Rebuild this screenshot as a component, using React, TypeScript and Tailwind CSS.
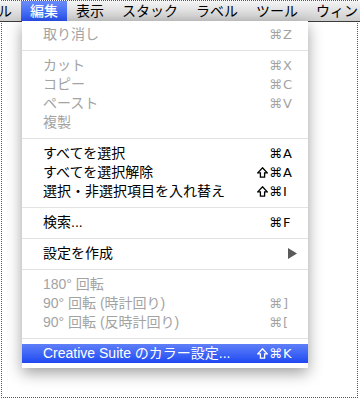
import React from "react";

type Item =
  | { sep: true }
  | { label: string; shift?: boolean; key?: string; disabled?: boolean; submenu?: boolean; active?: boolean };

const items: Item[] = [
  { label: "取り消し", key: "Z", disabled: true },
  { sep: true },
  { label: "カット", key: "X", disabled: true },
  { label: "コピー", key: "C", disabled: true },
  { label: "ペースト", key: "V", disabled: true },
  { label: "複製", disabled: true },
  { sep: true },
  { label: "すべてを選択", key: "A" },
  { label: "すべてを選択解除", shift: true, key: "A" },
  { label: "選択・非選択項目を入れ替え", shift: true, key: "I" },
  { sep: true },
  { label: "検索...", key: "F" },
  { sep: true },
  { label: "設定を作成", submenu: true },
  { sep: true },
  { label: "180° 回転", disabled: true },
  { label: "90° 回転 (時計回り)", key: "]", disabled: true },
  { label: "90° 回転 (反時計回り)", key: "[", disabled: true },
  { sep: true },
  { label: "Creative Suite のカラー設定...", shift: true, key: "K", active: true },
];

const bar = ["ル", "編集", "表示", "スタック", "ラベル", "ツール", "ウィンドウ"];

const ShiftIcon = () => (
  <svg width="11" height="11" viewBox="0 0 11 11" className="mr-[1px]">
    <path
      d="M5.5 0.8 L10.2 5.8 L7.6 5.8 L7.6 10.2 L3.4 10.2 L3.4 5.8 L0.8 5.8 Z"
      fill="none"
      stroke="currentColor"
      strokeWidth="1.3"
      strokeLinejoin="miter"
    />
  </svg>
);

const MenuRow: React.FC<{ item: Item }> = ({ item }) => {
  if ("sep" in item) {
    return (
      <div className="h-[12px] flex items-center">
        <div className="h-px w-full bg-[#e3e3e3]" />
      </div>
    );
  }
  const color = item.active ? "text-white" : item.disabled ? "text-[#a3a3a3]" : "text-black";
  return (
    <div
      className={`h-[19px] flex items-center pl-[21px] pr-[15px] ${color} ${
        item.active ? "bg-gradient-to-b from-[#5f7ff8] to-[#2047f1]" : ""
      }`}
    >
      <span className="flex-1 text-[14px] leading-[19px] whitespace-nowrap">{item.label}</span>
      {item.key && (
        <span className="flex items-center text-[13px] leading-[19px] font-['DejaVu_Sans',sans-serif]">
          {item.shift && <ShiftIcon />}
          <span>⌘</span>
          <span className="w-[10px] ml-[1px]">{item.key}</span>
        </span>
      )}
      {item.submenu && (
        <svg width="9" height="11" viewBox="0 0 9 11" className="mr-[-4px]">
          <path d="M0 0 L9 5.5 L0 11 Z" fill="#5a5a5a" />
        </svg>
      )}
    </div>
  );
};

export default function App() {
  return (
    <div className="w-[360px] h-[400px] bg-white pl-[1px] pr-[2px] pb-[2px] overflow-hidden font-['Liberation_Sans','Noto_Sans_CJK_JP',sans-serif]">
      <div className="relative h-full border border-dotted border-[#555]">
        <div className="-ml-[2px] -mr-[3px] h-[21px] flex items-stretch whitespace-nowrap overflow-hidden bg-gradient-to-b from-[#f4f4f4] to-[#cdcdcd] border-b border-[#3c3c3c]">
          <div className="flex -ml-[11px]">
            {bar.map((b) => (
              <div
                key={b}
                className={`px-[9px] text-[14px] leading-[20px] ${
                  b === "編集"
                    ? "bg-gradient-to-b from-[#6b8cf9] to-[#2a50f2] text-white font-medium"
                    : "text-black"
                }`}
              >
                {b}
              </div>
            ))}
          </div>
        </div>
        <div className="absolute left-[20px] top-[20px] w-[286px] bg-white pt-[4px] pb-[5px] shadow-[0_5px_14px_rgba(0,0,0,0.38)]">
          {items.map((it, i) => (
            <MenuRow key={i} item={it} />
          ))}
        </div>
      </div>
    </div>
  );
}
